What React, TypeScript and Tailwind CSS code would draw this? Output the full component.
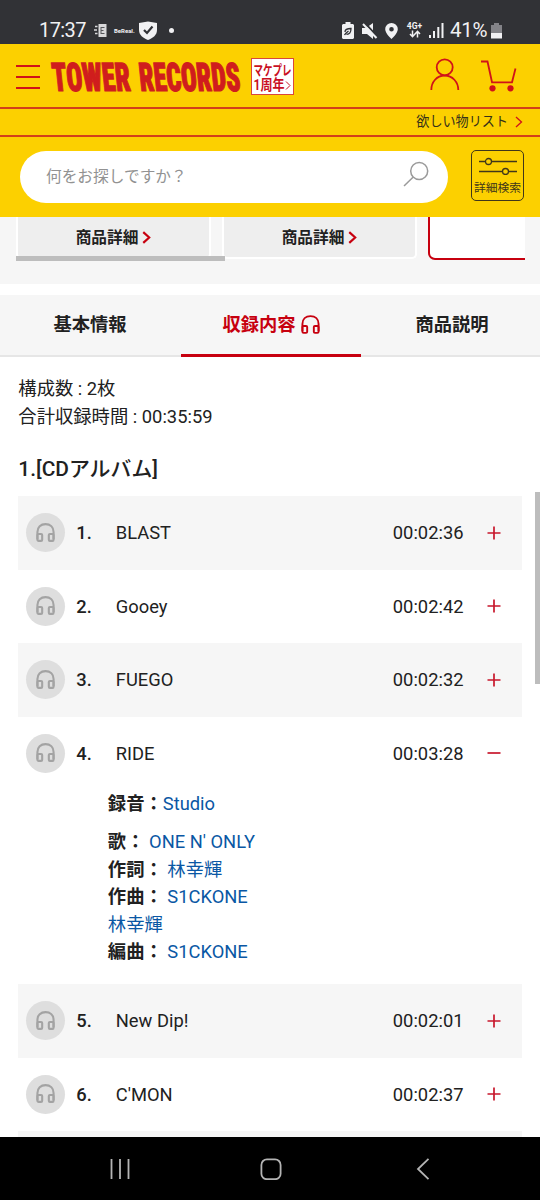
import React from 'react';

interface Track {
  no: number;
  title: string;
  time: string;
  open?: boolean;
}

const tracks: Track[] = [
  { no: 1, title: 'BLAST', time: '00:02:36' },
  { no: 2, title: 'Gooey', time: '00:02:42' },
  { no: 3, title: 'FUEGO', time: '00:02:32' },
  { no: 4, title: 'RIDE', time: '00:03:28', open: true },
  { no: 5, title: 'New Dip!', time: '00:02:01' },
  { no: 6, title: "C'MON", time: '00:02:37' },
];

const Headphones = ({ className, strokeWidth = 2 }: { className: string; strokeWidth?: number }) => (
  <svg viewBox="0 0 20 20" fill="none" stroke="currentColor" strokeWidth={strokeWidth} className={className}>
    <path d="M1.500 17V9.500c0-5 3.500-8.300 8.500-8.300s8.500 3.300 8.500 8.300V17" />
    <rect x="1.500" y="11.500" width="5" height="7.300" rx="1.200" />
    <rect x="13.500" y="11.500" width="5" height="7.300" rx="1.200" />
  </svg>
);

const Chevron = ({ className, strokeWidth }: { className: string; strokeWidth: number }) => (
  <svg viewBox="0 0 8 12" fill="none" stroke="currentColor" strokeWidth={strokeWidth} className={className}>
    <path d="M1 1l5.500 5L1 11" />
  </svg>
);

const StatusBar = () => (
  <div className="flex h-11 shrink-0 items-start bg-[#313236] pt-[18px] pr-[38px] pl-[39px] text-[#f1f1f3]">
    <span className="w-[47px] text-[20px] leading-6 tracking-[-0.6px] whitespace-nowrap">17:37</span>
    <svg viewBox="0 0 14 14" className="ml-[8px] mt-[5.5px] h-3.5 w-3.5">
      <path d="M4.500 0h8v13h-8z" fill="#d9d9db" />
      <path d="M1 2.500h2.500M0 6h3M1 9.500h2.500" stroke="#d9d9db" strokeWidth="1.4" />
      <path d="M7 3v7M7 3.500h3.500M7 6.500h2.500M7 9.500h3.500" fill="none" stroke="#55565a" strokeWidth="1" />
    </svg>
    <span className="ml-[6px] mt-[6.500px] w-[20px] text-[6px] leading-3 font-bold whitespace-nowrap">BeReal.</span>
    <svg viewBox="0 0 18 19" className="ml-[5px] mt-[3px] h-[19px] w-[18px]">
      <path d="M9 0.500L18 2v7c0 5-4 8-9 10C4 17 0 14 0 9V2z" fill="#f1f1f3" />
      <path d="M5 9l3 3 5.500-6.500" fill="none" stroke="#313236" strokeWidth="2.200" />
    </svg>
    <span className="ml-[12px] mt-[10px] h-[5px] w-[5px] rounded-full bg-[#f1f1f3]" />
    <div className="ml-auto flex items-start">
      <svg viewBox="0 0 12 17" className="mt-[4px] mr-[8px] h-[17px] w-3">
        <path d="M3.500 0h5v2H11l1 1v13l-1 1H1l-1-1V3l1-1h2.500z" fill="#f1f1f3" />
        <path d="M2.500 13c1-1.500 2-2.500 4-4M3 10c0-2.500 2-3.500 6-3.500 0 4-1.500 6-4.500 5.800" fill="none" stroke="#313236" strokeWidth="1.300" />
      </svg>
      <svg viewBox="0 0 16 16" className="mt-[5px] mr-[7px] h-4 w-4">
        <path d="M0 5h4l7-5v16l-6-5H0z" fill="#f1f1f3" />
        <path d="M3 0L17 15.500" stroke="#313236" strokeWidth="2" />
        <path d="M1 1l13.500 14" stroke="#f1f1f3" strokeWidth="2" />
      </svg>
      <svg viewBox="0 0 13 16" className="mt-[4.500px] mr-[8px] h-4 w-[13px]">
        <path d="M6.500 0A6.300 6.300 0 0 0 .2 6.300C.2 10.500 6.500 16 6.500 16s6.300-5.500 6.300-9.700A6.300 6.300 0 0 0 6.500 0zm0 8.600a2.300 2.300 0 1 1 0-4.600 2.300 2.300 0 0 1 0 4.600z" fill="#f1f1f3" />
      </svg>
      <div className="mr-[6px] mt-[4px] flex w-[17px] flex-col items-center">
        <span className="text-[8.500px] leading-[8px] font-bold">4G+</span>
        <svg viewBox="0 0 12 8" className="h-2 w-3" fill="none" stroke="#f1f1f3" strokeWidth="1.500">
          <path d="M3.500 0.500v6M1 4l2.500 2.700L6 4M8.500 7.500V1.500M6 4l2.500-2.700L11 4" />
        </svg>
      </div>
      <svg viewBox="0 0 15 15" className="mt-[5px] mr-[7px] h-[15px] w-[15px]" fill="#f1f1f3">
        <path d="M0 12h2v3H0zM4 8h2v7H4zM8.300 4h2v11h-2zM12.500 0h2v15h-2z" />
      </svg>
      <span className="ml-[-1px] w-[40px] text-[20.500px] leading-6 tracking-[-0.3px] whitespace-nowrap">41%</span>
      <svg viewBox="0 0 11 16" className="mt-[4.500px] ml-[1px] h-4 w-[11px]">
        <path d="M3 0h5v2h3v8H0V2h3z" fill="#838388" />
        <path d="M0 10h11v5.500H0z" fill="#f1f1f3" />
      </svg>
    </div>
  </div>
);

const Logo = () => (
  <svg
    viewBox="0 0 196 40"
    className="mt-[13px] ml-[9px] h-10 w-[196px] overflow-visible font-['Roboto'] [font-stretch:75%]"
    fill="#d01d1d"
    stroke="#d01d1d"
    strokeWidth="1.200"
    fontSize="39.500"
    fontWeight="900"
  >
    <text transform="translate(4.500 33.600) skewX(6)" textLength="78" lengthAdjust="spacingAndGlyphs">TOWER</text>
    <text transform="translate(91.500 33.600) skewX(6)" textLength="101" lengthAdjust="spacingAndGlyphs">RECORDS</text>
  </svg>
);

const Header = () => (
  <header className="h-[173px] shrink-0 bg-[#fcd000] text-[#d01319]">
    <div className="flex h-[63px] items-start">
      <div className="mt-[21px] ml-4 flex w-6 flex-col gap-[9.500px]">
        <span className="h-[1.500px] bg-[#d01319]" />
        <span className="h-[1.500px] bg-[#d01319]" />
        <span className="h-[1.500px] bg-[#d01319]" />
      </div>
      <Logo />
      <div className="mt-[14px] ml-[5.500px] h-[37px] w-[43px] border border-[#d9483c] bg-white text-[#c90f23]">
        <svg viewBox="0 0 41 35" className="h-[35px] w-[41px] overflow-visible font-['Roboto','Noto_Sans_CJK_JP',sans-serif]" fill="#c90f23" fontWeight="700">
          <text x="1.500" y="15.500" fontSize="13.500" textLength="38" lengthAdjust="spacingAndGlyphs">マケプレ</text>
          <text x="1.500" y="31" fontSize="14.500" textLength="31" lengthAdjust="spacingAndGlyphs">1周年</text>
          <path d="M34 22.500l4 4-4 4" fill="none" stroke="#c90f23" strokeWidth="1" />
        </svg>
      </div>
      <svg viewBox="0 0 30 34" className="mt-[14px] ml-[136px] h-[34px] w-[30px]" fill="none" stroke="#d01319" strokeWidth="1.800">
        <circle cx="14.700" cy="9.300" r="8" />
        <path d="M1.300 32c0-8 5.500-14.500 13.300-14.500S28.300 24 28.300 32" />
      </svg>
      <svg viewBox="0 0 36 34" className="mt-[16px] ml-[21px] h-[34px] w-9" fill="none" stroke="#d01319" strokeWidth="1.800">
        <path d="M0 1.500h6.500L11 22.300h20L34.500 8.500" />
        <circle cx="11.500" cy="28.300" r="3.100" fill="#d01319" stroke="none" />
        <circle cx="29.500" cy="28.300" r="3.100" fill="#d01319" stroke="none" />
      </svg>
    </div>
    <div className="flex h-[30px] items-center justify-end border-y-2 border-[#d2401a] pr-[17px] text-[13.100px] text-[#35301a]">
      <span>欲しい物リスト</span>
      <Chevron className="ml-[7px] h-[12px] w-[8px] text-[#d01319]" strokeWidth={1.3} />
    </div>
    <div className="flex pt-[13px] pl-[19.500px]">
      <div className="mt-[0.500px] flex h-[52.500px] w-[428.500px] items-center rounded-full bg-white pl-[26.500px] text-[15.700px] text-[#929292]">
        <span className="pt-px">何をお探しですか？</span>
        <svg viewBox="0 0 26 26" className="mt-[-6px] ml-auto mr-[19px] h-[26px] w-[26px]" fill="none" stroke="#9a9a9a" strokeWidth="1.500">
          <circle cx="16.200" cy="10" r="8.500" />
          <path d="M10 16.200L1 25" />
        </svg>
      </div>
      <div className="ml-[23px] flex h-[51px] w-[53px] flex-col items-center rounded-[5px] border-[1.500px] border-[#40371a] pt-[6px] text-[11.800px] leading-4 whitespace-nowrap text-[#40371a]">
        <svg viewBox="0 0 38 18" className="h-[18px] w-[38px] shrink-0" fill="#fcd000" stroke="#40371a" strokeWidth="1.300">
          <path d="M0 4.500h38M0 14.500h38" />
          <circle cx="9.500" cy="4.500" r="3" />
          <circle cx="26.500" cy="14.500" r="3" />
        </svg>
        <span className="mt-[5px]">詳細検索</span>
      </div>
    </div>
  </header>
);

const DetailButton = () => (
  <div className="flex h-[42px] w-[195px] items-center justify-center rounded-b-[5px] border-2 border-t-0 border-white bg-[#eeeeee] pt-[2px] text-[15.700px] font-bold">
    商品詳細
    <Chevron className="ml-[4px] mb-px h-[13px] w-[9px] text-[#c7000f]" strokeWidth={2} />
  </div>
);

const Carousel = () => (
  <div className="h-[67px] shrink-0 bg-[#f6f6f6] pl-4">
    <div className="relative flex h-[44px] w-[509px] overflow-hidden">
      <div className="flex gap-[11px]">
        <DetailButton />
        <DetailButton />
        <div className="h-[43px] w-[195px] shrink-0 rounded-b-[7px] border-2 border-t-0 border-[#c7000f] bg-white" />
      </div>
      <div className="absolute top-[38.500px] left-0 h-[5px] w-[209px] bg-[#bdbdbd]" />
    </div>
  </div>
);

const Tabs = () => (
  <div className="mt-[11px] grid h-[62px] shrink-0 grid-cols-[181px_180px_179px] border-b-2 border-[#e6e6e6] bg-[#f6f6f6] text-[18.300px] font-bold">
    <div className="flex h-[59px] items-center justify-center pr-px">基本情報</div>
    <div className="flex h-[62px] items-center justify-center gap-[5px] border-b-[3px] border-[#c7000f] text-[#c7000f]">
      収録内容
      <Headphones className="h-[19px] w-[19px]" strokeWidth={2} />
    </div>
    <div className="flex h-[59px] items-center justify-center pl-[3px]">商品説明</div>
  </div>
);

const Credits = () => (
  <div className="pl-[89.500px] leading-[27.500px]">
    <p><b className="font-bold">録音：</b><a className="text-[#0a57a4]">Studio</a></p>
    <p className="mt-[10.500px]"><b className="font-bold">歌：</b> <a className="text-[#0a57a4]">ONE N' ONLY</a></p>
    <p><b className="font-bold">作詞：</b> <a className="text-[#0a57a4]">林幸輝</a></p>
    <p><b className="font-bold">作曲：</b> <a className="text-[#0a57a4]">S1CKONE</a></p>
    <p><a className="text-[#0a57a4]">林幸輝</a></p>
    <p><b className="font-bold">編曲：</b> <a className="text-[#0a57a4]">S1CKONE</a></p>
  </div>
);

const TrackRow = ({ track }: { track: Track }) => (
  <li className={`${track.no % 2 ? 'bg-[#f6f6f6]' : 'bg-white'} ${track.open ? 'h-[267.500px]' : 'h-[73.500px]'}`}>
    <div className="flex h-[73.500px] items-center pl-2">
      <span className="flex h-[39px] w-[39px] items-center justify-center rounded-full bg-[#dedede]">
        <Headphones className="mb-px h-[19px] w-[19px] text-[#a3a3a3]" strokeWidth={2.2} />
      </span>
      <span className="ml-[11px] w-[39.500px] font-medium">{track.no}.</span>
      <span className="flex-1">{track.title}</span>
      <span>{track.time}</span>
      <svg viewBox="0 0 14 14" className="mr-[21px] ml-[23px] h-3.5 w-3.5" stroke="#c8172c" strokeWidth="1.700">
        <path d={track.open ? 'M0.500 7h13' : 'M0.500 7h13M7 0.500v13'} />
      </svg>
    </div>
    {track.open && <Credits />}
  </li>
);

const NavBar = () => (
  <nav className="flex h-[63px] shrink-0 items-center bg-black pt-px">
    <svg viewBox="0 0 22 22" className="ml-[109px] h-[22px] w-[22px]" stroke="#b4b4b4" strokeWidth="1.800">
      <path d="M2.500 1v20M11 1v20M19.500 1v20" />
    </svg>
    <svg viewBox="0 0 22 22" className="ml-[129px] h-[22px] w-[22px]" fill="none" stroke="#b4b4b4" strokeWidth="1.800">
      <rect x="1.400" y="1.400" width="19.200" height="19.800" rx="5.500" />
    </svg>
    <svg viewBox="0 0 14 22" className="ml-[134px] h-[22px] w-3.5" fill="none" stroke="#b4b4b4" strokeWidth="1.800">
      <path d="M12.500 0.800L2 11l10.500 10.200" />
    </svg>
  </nav>
);

export default function App() {
  return (
    <div lang="ja" className="flex h-[1200px] w-[540px] flex-col overflow-hidden bg-white font-['Roboto','Noto_Sans_CJK_JP',sans-serif] text-[#212121]">
      <StatusBar />
      <Header />
      <Carousel />
      <Tabs />
      <main className="relative min-h-0 flex-1 overflow-hidden pr-[18.500px] pl-[18.300px] text-[18.330px]">
        <p className="mt-[18px] leading-[27.500px]">構成数 : 2枚</p>
        <p className="leading-[27.500px]">合計収録時間 : 00:35:59</p>
        <h2 className="mt-[24px] mb-[11px] text-[20.900px] leading-[31px] font-medium">1.[CDアルバム]</h2>
        <ul>
          {tracks.map((track) => (
            <TrackRow key={track.no} track={track} />
          ))}
          <li className="h-[73.500px] bg-[#f6f6f6]" />
        </ul>
        <div className="absolute top-[135px] right-0 h-[192px] w-[5px] bg-[#bdbdbd]" />
      </main>
      <NavBar />
    </div>
  );
}
